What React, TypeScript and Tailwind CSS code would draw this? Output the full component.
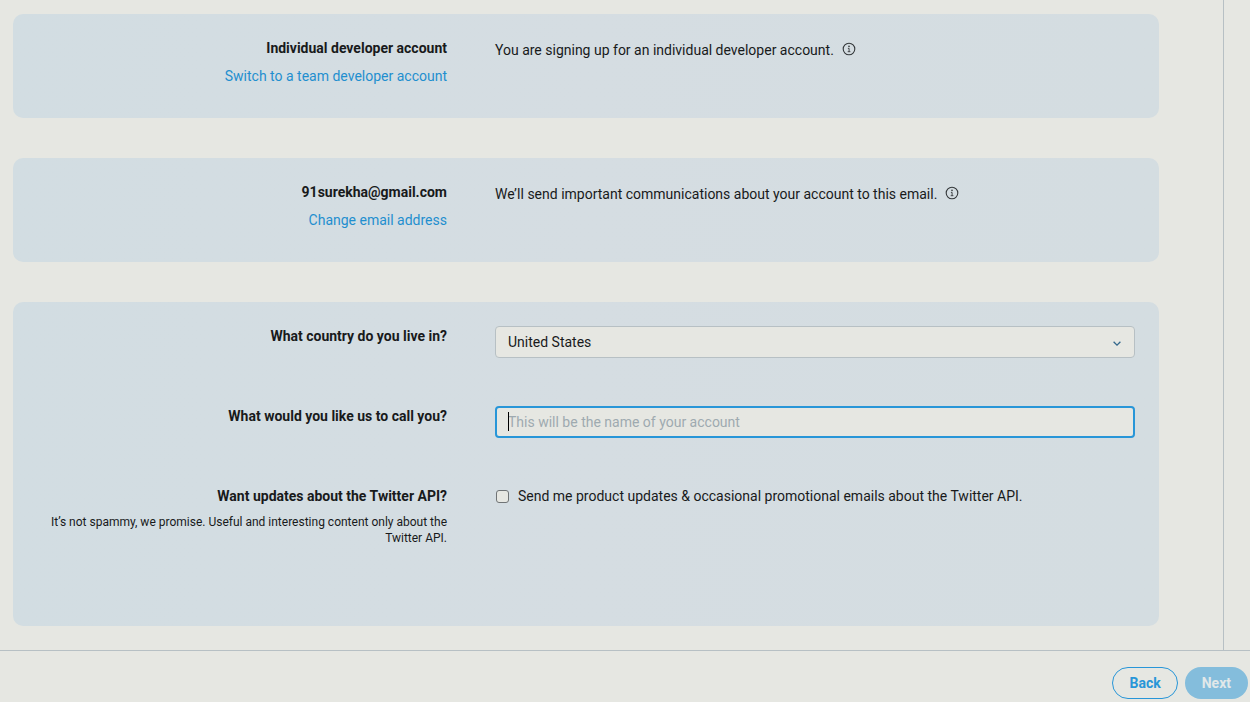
import { useState, type ReactNode } from "react";

function InfoIcon() {
  return (
    <svg viewBox="0 0 14 14" className="h-3.5 w-3.5" fill="none" stroke="#35393b" aria-hidden="true">
      <circle cx="7" cy="7" r="5.8" strokeWidth="1.1" />
      <path d="M5.9 6.4H7.1V9.7M5.7 9.7H8.4" strokeWidth="0.9" />
      <circle cx="7" cy="4.4" r="0.8" fill="#35393b" stroke="none" />
    </svg>
  );
}

function Card({ children }: { children: ReactNode }) {
  return (
    <section className="rounded-[10px] bg-linear-to-r from-[#d2dde2] via-[#d5dde2] to-[#d4dde1] px-6 pt-6 text-sm">
      {children}
    </section>
  );
}

function Row({ left, children }: { left: ReactNode; children: ReactNode }) {
  return (
    <div className="grid min-h-20 grid-cols-[41fr_64fr] gap-12">
      <div className="text-right">{left}</div>
      <div>{children}</div>
    </div>
  );
}

function AccountCard({ title, action, note }: { title: string; action: string; note: string }) {
  return (
    <Card>
      <Row
        left={
          <>
            <h2 className="leading-5 font-bold">{title}</h2>
            <a href="#" className="mt-2 inline-block leading-5 text-[#1f8fcf]">
              {action}
            </a>
          </>
        }
      >
        <div className="flex items-center gap-2">
          <p className="pt-0.5 leading-5">{note}</p>
          <button type="button" aria-label="More information" className="rounded-full">
            <InfoIcon />
          </button>
        </div>
      </Row>
    </Card>
  );
}

export default function App() {
  const [name, setName] = useState("");
  return (
    <div className="flex min-h-screen flex-col bg-[#e6e7e2] font-[Roboto,sans-serif] text-[#181a1b]">
      <div className="flex flex-1 pr-[26px]">
        <main className="flex flex-1 flex-col gap-10 border-r border-[#b7c0c4] pt-3.5 pr-16 pb-6 pl-[13px]">
          <AccountCard
            title="Individual developer account"
            action="Switch to a team developer account"
            note="You are signing up for an individual developer account."
          />
          <AccountCard
            title="91surekha@gmail.com"
            action="Change email address"
            note="We’ll send important communications about your account to this email."
          />
          <Card>
            <Row left={<label htmlFor="country" className="block leading-5 font-bold">What country do you live in?</label>}>
              <div className="relative">
                <select
                  id="country"
                  className="h-8 w-full appearance-none rounded border border-[#b7c0c4] bg-[#e6e7e2] px-3 outline-none"
                >
                  <option>United States</option>
                </select>
                <svg
                  viewBox="0 0 8 5"
                  className="pointer-events-none absolute top-[15px] right-3.5 h-[5px] w-2"
                  fill="none"
                  stroke="#34688c"
                  strokeWidth="1.3"
                  aria-hidden="true"
                >
                  <path d="M0.6 0.7L4 4.1L7.4 0.7" />
                </svg>
              </div>
            </Row>
            <Row left={<label htmlFor="name" className="block leading-5 font-bold">What would you like us to call you?</label>}>
              <div className="relative">
                <input
                  id="name"
                  type="text"
                  value={name}
                  onChange={(e) => setName(e.target.value)}
                  placeholder="This will be the name of your account"
                  className="block h-8 w-full rounded border-2 border-[#2896d8] bg-[#e6e7e2] px-[11px] outline-none placeholder:text-[#9eaab0]"
                />
                {name === "" && (
                  <span aria-hidden="true" className="pointer-events-none absolute top-1.5 left-[13px] h-[19px] w-px bg-black" />
                )}
              </div>
            </Row>
            <div className="pb-[60px]">
              <Row
                left={
                  <>
                    <h2 className="leading-5 font-bold">Want updates about the Twitter API?</h2>
                    <p className="mt-2 text-xs leading-4">
                      It’s not spammy, we promise. Useful and interesting content only about the Twitter API.
                    </p>
                  </>
                }
              >
                <label className="flex items-center leading-5">
                  <input
                    type="checkbox"
                    className="mr-[9px] ml-px h-[13px] w-[13px] appearance-none rounded-[3px] border border-[#707476] bg-[#e6e7e2] checked:bg-[#2896d8]"
                  />
                  Send me product updates &amp; occasional promotional emails about the Twitter API.
                </label>
              </Row>
            </div>
          </Card>
        </main>
      </div>
      <footer className="flex justify-end gap-[7px] border-t border-[#b7c0c4] pt-4 pr-0.5 pb-[3px] text-sm font-bold">
        <button type="button" className="h-8 rounded-full border border-[#2896d8] px-4 text-[#2896d8]">
          Back
        </button>
        <button type="button" className="h-8 rounded-full bg-[#84bddc] px-[17px] text-[#e1e8e9]">
          Next
        </button>
      </footer>
    </div>
  );
}
